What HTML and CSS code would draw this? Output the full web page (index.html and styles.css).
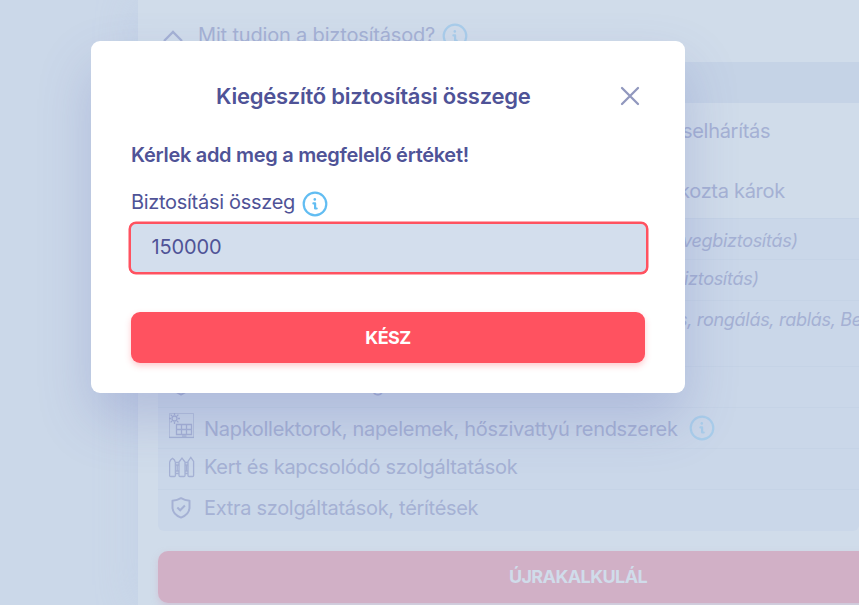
FILE: index.html
```html
<!DOCTYPE html>
<html lang="hu">
<head>
<meta charset="utf-8">
<title>Biztosítás</title>
<link rel="stylesheet" href="styles.css">
</head>
<body>
<svg width="0" height="0" class="defs">
  <symbol id="info" viewBox="0 0 26 26">
    <circle cx="13" cy="13" r="11.3" fill="none" stroke="currentColor" stroke-width="2.200"/>
    <circle cx="12.8" cy="8.4" r="1.300" fill="currentColor"/>
    <path d="M11.400 12.400h1.700v5.100h1.600" fill="none" stroke="currentColor" stroke-width="2.200" stroke-linecap="round" stroke-linejoin="round"/>
  </symbol>
  <symbol id="shield" viewBox="0 0 24 24">
    <path d="M12 2.2c2.600 1.500 5.300 2.300 8.500 2.600v6.500c0 5-3.400 8.300-8.500 10.300-5.100-2-8.500-5.300-8.500-10.300V4.800c3.200-.3 5.900-1.100 8.500-2.600z" fill="none" stroke="currentColor" stroke-width="2" stroke-linejoin="round"/>
    <path d="M8.300 11.500l2.900 2.800 4.700-4.800" fill="none" stroke="currentColor" stroke-width="2"/>
  </symbol>
</svg>
<main class="page">
  <header class="section-head">
    <svg class="chevron" viewBox="0 0 22 14"><path d="M2 12l9-9 9 9" fill="none" stroke="currentColor" stroke-width="2.300"/></svg>
    <h2>Mit tudjon a biztosításod?</h2>
    <svg class="info"><use href="#info"/></svg>
  </header>
  <div class="table">
    <div class="band"></div>
    <div class="plain first"><span>selhárítás</span></div>
    <div class="plain second"><span>kozta károk</span></div>
    <div class="row note n1"><span>vegbiztosítás)</span></div>
    <div class="row note n2"><span>iztosítás)</span></div>
    <div class="row note n3"><span>s, rongálás, rablás, Be</span></div>
    <div class="row lead"><svg class="icon"><use href="#shield"/></svg><span>Családi felelősség</span></div>
    <div class="row solar">
      <svg class="icon" viewBox="0 0 26 26" fill="none" stroke="currentColor">
        <path d="M.5 24V.5h24V24" stroke-width=".6"/><path d="M0 24.400h25" stroke-width="1.400"/>
        <g stroke-width="1.300">
          <circle cx="5.500" cy="5.500" r="2.500"/>
          <path d="M5.500 0v2M5.500 9v2M0 5.500h2M9 5.500h2M1.600 1.600L3 3M8 8l1.400 1.400M1.600 9.400L3 8M8 3l1.400-1.400M7.500 11.500h15v10h-15zM7.500 16.500h15M12.500 11.500v10M17.500 11.500v10M13 23.200h4.500"/>
        </g>
      </svg>
      <span>Napkollektorok, napelemek, hőszivattyú rendszerek</span>
      <svg class="info"><use href="#info"/></svg>
    </div>
    <div class="row garden">
      <svg class="icon" viewBox="0 0 26 26" fill="none" stroke="currentColor" stroke-width="1.300">
        <path d="M.6 20.500V7.500Q1 4.500 3.500 3.300 6 4.500 6.400 7.500v13q0 1-1 1H1.600q-1 0-1-1zM10 20.500V7l3-4 3 4v13.500q0 1-1 1h-4q-1 0-1-1zM19 20.500V6.500l2.800-4 2.800 4v14q0 1-1 1H20q-1 0-1-1zM6.500 7.500H10M6.500 10H10M16 7.500h3M16 10h3M6.500 16H10M6.500 18.500H10M16 16h3M16 18.500h3M8.200 10v6M17.500 10v6"/>
      </svg>
      <span>Kert és kapcsolódó szolgáltatások</span>
    </div>
    <div class="row last"><svg class="icon"><use href="#shield"/></svg><span>Extra szolgáltatások, térítések</span></div>
  </div>
  <button class="recalc">ÚJRAKALKULÁL</button>
</main>
<section class="modal" role="dialog">
  <div class="modal-head">
    <h1>Kiegészítő biztosítási összege</h1>
    <svg class="close" viewBox="0 0 20 20"><path d="M2 2l16 16M18 2L2 18" fill="none" stroke="currentColor" stroke-width="2.300" stroke-linecap="round"/></svg>
  </div>
  <p class="prompt">Kérlek add meg a megfelelő értéket!</p>
  <label class="label" for="amount"><span>Biztosítási összeg</span><svg class="info"><use href="#info"/></svg></label>
  <input id="amount" class="field" type="text" value="150000">
  <button class="done">KÉSZ</button>
</section>
</body>
</html>
```
FILE: styles.css
```css
* { box-sizing: border-box; }
html, body { height: 100%; }
body {
  margin: 0;
  overflow: hidden;
  background: #cbd8e9;
  color: #a5b1d4;
  font: 400 20px/24px Inter, sans-serif;
  letter-spacing: -.3px;
}
h1, h2, p { margin: 0; }
.defs { position: absolute; }
svg { flex: none; }
span, h1, h2, p { white-space: nowrap; }
.page {
  margin-left: 138px;
  height: 605px;
  overflow: hidden;
  background: #d0dcea;
  box-shadow: 0 0 40px rgba(175, 192, 226, .3);
}
.section-head {
  display: flex;
  height: 62px;
  padding: 23px 0 0 24px;
}
.section-head h2 { font: inherit; letter-spacing: -.17px; margin-left: 14px; width: 238px; }
.chevron { width: 22px; height: 14px; margin-top: 6px; }
.info { width: 26px; height: 26px; color: #a9cdea; }
.section-head .info { margin-left: 6px; }
.table { margin-left: 20px; }
.band { height: 41px; background: #c5d3e6; }
.plain { padding-left: 524px; }
.first { height: 60px; padding-top: 16px; }
.second { height: 55px; padding-top: 16px; padding-left: 521px; }
.row {
  display: flex;
  background: #cad7e9;
  border-top: 1px solid #c5d3e6;
  padding-left: 10px;
}
.note { font-size: 18px; font-style: italic; padding-left: 524px; }
.n1 { height: 41px; padding-top: 10px; }
.n2 { height: 41px; padding-top: 7px; padding-left: 526px; }
.n3 { height: 66px; padding-top: 7px; padding-left: 520px; }
.icon { width: 26px; height: 26px; margin-right: 10px; }
.lead { height: 41px; padding-top: 5px; }
.lead .icon { width: 24px; height: 24px; margin: 1px 24px 0 1px; }
.solar { height: 41px; padding-top: 9px; }
.solar .icon { margin: -4px 9px 0 1px; }
.solar span { width: 473px; }
.solar .info { margin: -2px 0 0 12px; }
.garden { height: 41px; padding-top: 6px; }
.garden .icon { margin: 0 9px 0 1px; }
.last { height: 42px; padding-top: 6px; border-radius: 0 0 6px 6px; }
.last .icon { width: 24px; height: 24px; margin: 0 11px 0 1px; }
button { border: 0; padding: 0; font-family: inherit; letter-spacing: -.5px; }
.recalc {
  display: block;
  width: 840px;
  height: 52px;
  margin: 20px 0 0 20px;
  padding-bottom: 2px;
  border-radius: 10px;
  background: #d1b0c6;
  color: #d0dcea;
  font-size: 18px;
  font-weight: 700;
  letter-spacing: -.6px;
  box-shadow: 0 3px 6px rgba(209, 176, 198, .5);
}
.modal {
  position: absolute;
  left: 91px;
  top: 41px;
  width: 594px;
  height: 352px;
  padding: 40px;
  border-radius: 9px;
  background: #fff;
  color: #4f5397;
  box-shadow: 0 26px 54px rgba(80, 90, 175, .23);
}
.modal-head { display: flex; justify-content: flex-end; height: 30px; }
h1 { font-size: 22px; line-height: 30px; font-weight: 600; letter-spacing: -.25px; width: 314px; }
.close { width: 20px; height: 20px; margin: 5px 5px 0 90px; color: #9198be; }
.prompt { font-weight: 600; margin-top: 32px; }
.label { display: flex; margin-top: 23px; height: 32px; }
.label span { width: 164px; }
.label .info { margin: 1px 0 0 7px; color: #62bdf2; }
.field {
  display: block;
  width: 519px;
  height: 52px;
  margin-left: -2.500px;
  padding: 0 21px 2px;
  border: 2px solid #ff5260;
  border-radius: 7px;
  outline: 0;
  background: #d3deed;
  box-shadow: 0 0 0 .5px #ff5260;
  color: #4f5397;
  font: inherit;
  letter-spacing: -.15px;
}
.done {
  display: block;
  width: 514px;
  height: 51px;
  margin-top: 38px;
  border-radius: 9px;
  background: #ff5260;
  color: #fff;
  font-size: 18px;
  font-weight: 700;
  box-shadow: 0 3px 6px rgba(255, 82, 96, .3);
}
```
